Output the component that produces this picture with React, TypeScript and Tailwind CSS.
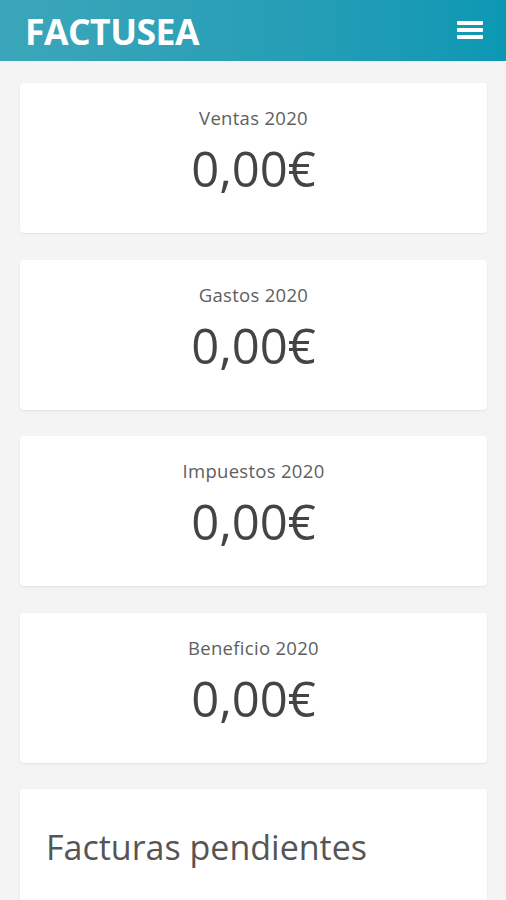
import React from "react";

const cards = ["Ventas 2020", "Gastos 2020", "Impuestos 2020", "Beneficio 2020"];

export default function App() {
  return (
    <div
      className="min-h-[900px] bg-[#f4f4f4]"
      style={{ fontFamily: '"Open Sans", "Noto Sans", sans-serif' }}
    >
      <header className="h-[61px] flex items-center justify-between pl-[25px] pr-[23px] bg-gradient-to-r from-[#3ba6ba] to-[#0b98b3]">
        <span className="text-white font-bold text-[35.5px] leading-none tracking-[-0.5px] mt-[2px]">FACTUSEA</span>
        <div className="flex flex-col gap-[3px] w-[26px] mt-[-1px]">
          <div className="h-[4px] bg-white rounded-[1px]" />
          <div className="h-[4px] bg-white rounded-[1px]" />
          <div className="h-[4px] bg-white rounded-[1px]" />
        </div>
      </header>
      <main className="px-[20px] pt-[22px] pr-[19px] flex flex-col gap-[26.6px]">
        {cards.map((c) => (
          <div
            key={c}
            className="bg-white rounded-[4px] h-[150px] flex flex-col items-center shadow-[0_1px_2px_rgba(0,0,0,0.08)]"
          >
            <div className="mt-[23px] text-[18.5px] leading-[24px] tracking-[0.3px] text-[#606060] font-normal">{c}</div>
            <div className="mt-[10px] text-[49px] leading-[56px] text-[#444] font-normal">0,00€</div>
          </div>
        ))}
        <div className="bg-white rounded-[4px] h-[140px] shadow-[0_1px_2px_rgba(0,0,0,0.08)] px-[26px] pt-[36px]">
          <div className="text-[34px] leading-[44px] text-[#555]">Facturas pendientes</div>
        </div>
      </main>
    </div>
  );
}
